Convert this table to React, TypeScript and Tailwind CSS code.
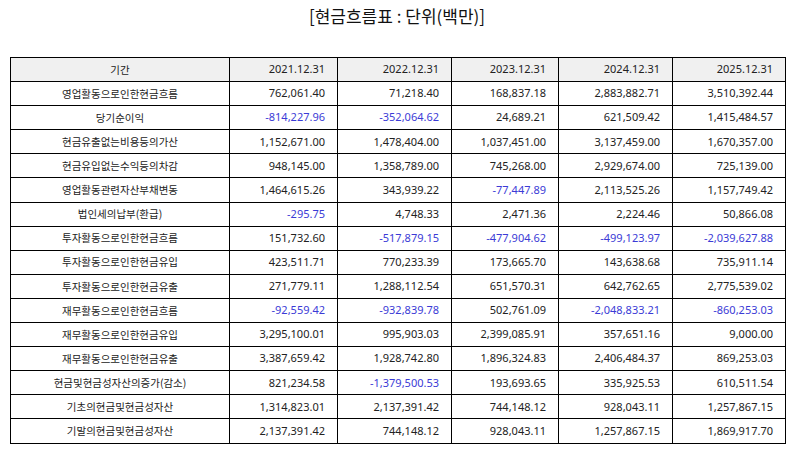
const columns = ["2021.12.31", "2022.12.31", "2023.12.31", "2024.12.31", "2025.12.31"]

const rows: [string, string[]][] = [
  ["영업활동으로인한현금흐름", ["762,061.40", "71,218.40", "168,837.18", "2,883,882.71", "3,510,392.44"]],
  ["당기순이익", ["-814,227.96", "-352,064.62", "24,689.21", "621,509.42", "1,415,484.57"]],
  ["현금유출없는비용등의가산", ["1,152,671.00", "1,478,404.00", "1,037,451.00", "3,137,459.00", "1,670,357.00"]],
  ["현금유입없는수익등의차감", ["948,145.00", "1,358,789.00", "745,268.00", "2,929,674.00", "725,139.00"]],
  ["영업활동관련자산부채변동", ["1,464,615.26", "343,939.22", "-77,447.89", "2,113,525.26", "1,157,749.42"]],
  ["법인세의납부(환급)", ["-295.75", "4,748.33", "2,471.36", "2,224.46", "50,866.08"]],
  ["투자활동으로인한현금흐름", ["151,732.60", "-517,879.15", "-477,904.62", "-499,123.97", "-2,039,627.88"]],
  ["투자활동으로인한현금유입", ["423,511.71", "770,233.39", "173,665.70", "143,638.68", "735,911.14"]],
  ["투자활동으로인한현금유출", ["271,779.11", "1,288,112.54", "651,570.31", "642,762.65", "2,775,539.02"]],
  ["재무활동으로인한현금흐름", ["-92,559.42", "-932,839.78", "502,761.09", "-2,048,833.21", "-860,253.03"]],
  ["재무활동으로인한현금유입", ["3,295,100.01", "995,903.03", "2,399,085.91", "357,651.16", "9,000.00"]],
  ["재무활동으로인한현금유출", ["3,387,659.42", "1,928,742.80", "1,896,324.83", "2,406,484.37", "869,253.03"]],
  ["현금및현금성자산의증가(감소)", ["821,234.58", "-1,379,500.53", "193,693.65", "335,925.53", "610,511.54"]],
  ["기초의현금및현금성자산", ["1,314,823.01", "2,137,391.42", "744,148.12", "928,043.11", "1,257,867.15"]],
  ["기말의현금및현금성자산", ["2,137,391.42", "744,148.12", "928,043.11", "1,257,867.15", "1,869,917.70"]],
]

const colWidths = ["w-[219px]", "w-[108px]", "w-[114px]", "w-[107px]", "w-[114px]", "w-[113px]"]

// numbers get a latin face so the digits come out as wide as the original
const num = "font-['Noto_Sans','Noto_Sans_CJK_KR',sans-serif] text-right pr-[12px]"

export default function App() {
  return (
    <div className="w-[794px] h-[452px] bg-white font-['Noto_Sans_CJK_KR','Noto_Sans',sans-serif] text-[#222]">
      <h1 className="pt-[4px] text-center text-[17px] leading-[24px] font-normal text-[#111]">
        [현금흐름표 : 단위(백만)]
      </h1>

      <table className="mt-[29px] ml-[10px] w-[775px] table-fixed border-collapse border-[1.5px] border-black text-[11px]">
        <colgroup>
          {colWidths.map((w, i) => (
            <col key={i} className={w} />
          ))}
        </colgroup>
        <thead>
          <tr className="h-[24.1px] bg-[#f0f0f0]">
            <th className="border border-black font-normal text-center text-[10.5px]">기간</th>
            {columns.map((c) => (
              <th key={c} className={`border border-black font-normal ${num}`}>
                {c}
              </th>
            ))}
          </tr>
        </thead>
        <tbody>
          {rows.map(([label, vals]) => (
            <tr key={label} className="h-[24.1px]">
              <td className="border border-black text-center text-[10.5px]">{label}</td>
              {vals.map((v, i) => (
                <td
                  key={i}
                  className={`border border-black ${num} ${v.startsWith("-") ? "text-[#3b3bd6]" : ""}`}
                >
                  {v}
                </td>
              ))}
            </tr>
          ))}
        </tbody>
      </table>
    </div>
  )
}
